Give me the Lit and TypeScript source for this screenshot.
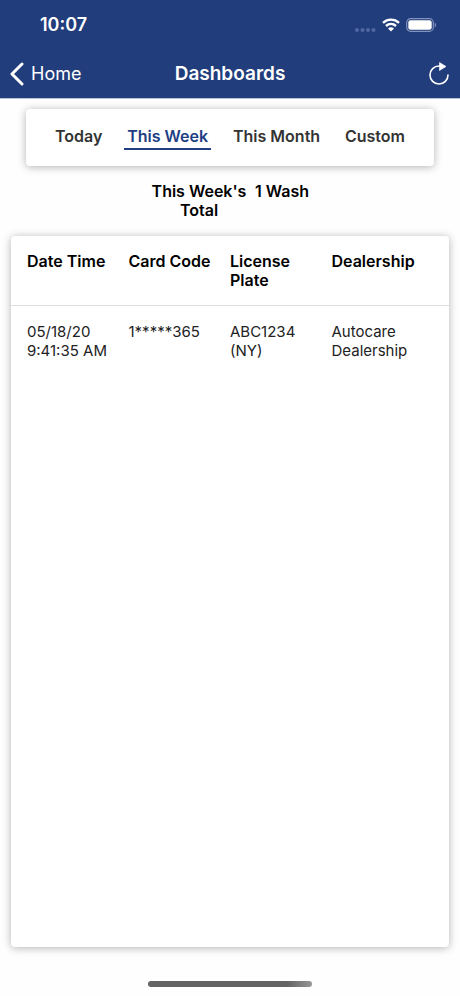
import { LitElement, html, css, svg } from "lit";
import { customElement, state } from "lit/decorators.js";
import { classMap } from "lit/directives/class-map.js";

interface Wash {
  date: string;
  time: string;
  card: string;
  plate: string;
  region: string;
  dealership: string;
}

const RANGES = ["Today", "This Week", "This Month", "Custom"];

const WASHES: Wash[] = [
  {
    date: "05/18/20",
    time: "9:41:35 AM",
    card: "1*****365",
    plate: "ABC1234",
    region: "(NY)",
    dealership: "Autocare Dealership",
  },
];

const signalDots = svg`<g fill="#5068a2">
  <circle cx="3" cy="3" r="2"/><circle cx="8.500" cy="3" r="2"/>
  <circle cx="14" cy="3" r="2"/><circle cx="19.500" cy="3" r="2"/></g>`;

@customElement("status-bar")
export class StatusBar extends LitElement {
  static styles = css`
    :host {
      display: flex;
      align-items: center;
      justify-content: space-between;
      height: 50px;
      padding: 0 23px 0 40px;
      color: #fff;
    }
    .clock {
      font-size: 18px;
      font-weight: 600;
      line-height: 20px;
    }
    .indicators {
      display: flex;
      align-items: center;
    }
    .signal {
      margin: 10px 6px 0 0;
    }
    .wifi {
      margin-right: 6px;
    }
    svg {
      display: block;
    }
  `;

  render() {
    return html`
      <span class="clock">10:07</span>
      <div class="indicators">
        <svg class="signal" width="22" height="6" viewBox="0 0 22 6" aria-hidden="true">
          ${signalDots}
        </svg>
        <svg class="wifi" width="18" height="14" viewBox="0 0 18 14" aria-hidden="true">
          <g fill="none" stroke="#fff" stroke-width="2.4">
            <path d="M1 4.8C5.600.6 12.400.6 17 4.800" />
            <path d="M4 8C6.900 5.300 11.100 5.300 14 8" />
          </g>
          <path d="M9 13.500L6 10.400C7.700 8.900 10.300 8.900 12 10.400Z" fill="#fff" />
        </svg>
        <svg width="31" height="14" viewBox="0 0 31 14" aria-hidden="true">
          <rect x="0.700" y="0.700" width="26.600" height="12.600" rx="3.800" fill="none" stroke="#8392bb" stroke-width="1.200" />
          <rect x="2.300" y="2.300" width="23.400" height="9.400" rx="2.200" fill="#fff" />
          <path d="M28.700 4.500C30.500 5.200 30.500 8.800 28.700 9.500Z" fill="#8392bb" />
        </svg>
      </div>
    `;
  }
}

@customElement("app-root")
export class AppRoot extends LitElement {
  static styles = css`
    :host {
      display: flex;
      flex-direction: column;
      box-sizing: border-box;
      min-height: 100vh;
      background: #fefefe;
      color: #000;
      font-family: Inter, "Liberation Sans", sans-serif;
      font-size: 15px;
      line-height: 19px;
    }
    .top {
      background: #213d7b;
      color: #fff;
      border-bottom: 1px solid #b9c2d9;
    }
    .nav {
      display: grid;
      grid-template-columns: 1fr auto 1fr;
      align-items: center;
      height: 48px;
      padding: 0 10px;
    }
    button {
      margin: 0;
      padding: 0;
      border: 0;
      background: none;
      color: inherit;
      font: inherit;
      cursor: pointer;
    }
    .back {
      display: flex;
      align-items: center;
      gap: 7px;
      justify-self: start;
      color: inherit;
      font-size: 18px;
      line-height: 24px;
      text-decoration: none;
    }
    .title {
      margin: 0;
      font-size: 19px;
      font-weight: 600;
      line-height: 24px;
    }
    .refresh {
      justify-self: end;
    }
    svg {
      display: block;
    }
    .panel {
      background: #fff;
      border-radius: 4px;
      box-shadow: 0 1px 8px rgba(0, 0, 0, 0.3);
    }
    .ranges {
      display: flex;
      justify-content: space-between;
      margin: 10px 26px 0;
      padding: 16px 26px;
    }
    .range {
      padding: 2px 3px;
      border-bottom: 2px solid transparent;
      color: #333;
      font-size: 16px;
      font-weight: 600;
    }
    .range.active {
      border-color: #213d84;
      color: #213d84;
    }
    .summary {
      display: flex;
      justify-content: center;
      gap: 8px;
      margin: 16px 0;
      font-size: 16px;
      font-weight: 600;
    }
    .summary p {
      margin: 0;
    }
    .label {
      width: 96px;
      text-align: center;
    }
    .log {
      flex: 1;
      margin: 0 11px 49px;
    }
    table {
      width: 100%;
    }
    tr {
      display: grid;
      grid-template-columns: repeat(4, 1fr);
      padding: 16px;
    }
    thead tr {
      border-bottom: 1px solid #dedede;
      padding-bottom: 15px;
    }
    th,
    td {
      padding: 0;
      text-align: left;
      white-space: nowrap;
    }
    th {
      font-size: 16px;
      font-weight: 600;
    }
    td {
      color: #222;
    }
    table,
    thead,
    tbody {
      display: block;
    }
    .wrap {
      white-space: normal;
    }
    .home-bar {
      align-self: center;
      width: 164px;
      height: 6px;
      margin-bottom: 9px;
      margin-top: -15px;
      border-radius: 3px;
      background: linear-gradient(to right, #646464 85%, #969696);
    }
  `;

  @state() private range = "This Week";

  render() {
    return html`
      <header class="top">
        <status-bar></status-bar>
        <nav class="nav">
          <a class="back" href="#home">
            <svg width="14" height="24" viewBox="0 0 14 24" aria-hidden="true">
              <path d="M12 2L2 12L12 22" fill="none" stroke="#fff" stroke-width="3" stroke-linecap="round" stroke-linejoin="round" />
            </svg>
            Home
          </a>
          <h1 class="title">Dashboards</h1>
          <button class="refresh" aria-label="Refresh">
            <svg width="22" height="24" viewBox="0 0 22 24" aria-hidden="true">
              <path d="M12 4H11A9 9 0 1 0 20 13" fill="none" stroke="#fff" stroke-width="1.600" stroke-linecap="round" />
              <path d="M11.500 0.500L18 4.500L11.500 8.500Z" fill="#fff" stroke="#fff" stroke-width="0.600" stroke-linejoin="round" />
            </svg>
          </button>
        </nav>
      </header>
      <div class="panel ranges">
        ${RANGES.map(
          (name) => html`<button
            class=${classMap({ range: true, active: name === this.range })}
            aria-pressed=${name === this.range}
            @click=${() => (this.range = name)}
          >${name}</button>`
        )}
      </div>
      <div class="summary">
        <p class="label">This Week's Total</p>
        <p>1 Wash</p>
      </div>
      <main class="panel log">
        <table>
          <thead>
            <tr>
              <th scope="col">Date Time</th>
              <th scope="col">Card Code</th>
              <th scope="col">License<br />Plate</th>
              <th scope="col">Dealership</th>
            </tr>
          </thead>
          <tbody>
            ${WASHES.map(
              (w) => html`<tr>
                <td>${w.date}<br />${w.time}</td>
                <td>${w.card}</td>
                <td>${w.plate}<br />${w.region}</td>
                <td class="wrap">${w.dealership}</td>
              </tr>`
            )}
          </tbody>
        </table>
      </main>
      <div class="home-bar"></div>
    `;
  }
}
